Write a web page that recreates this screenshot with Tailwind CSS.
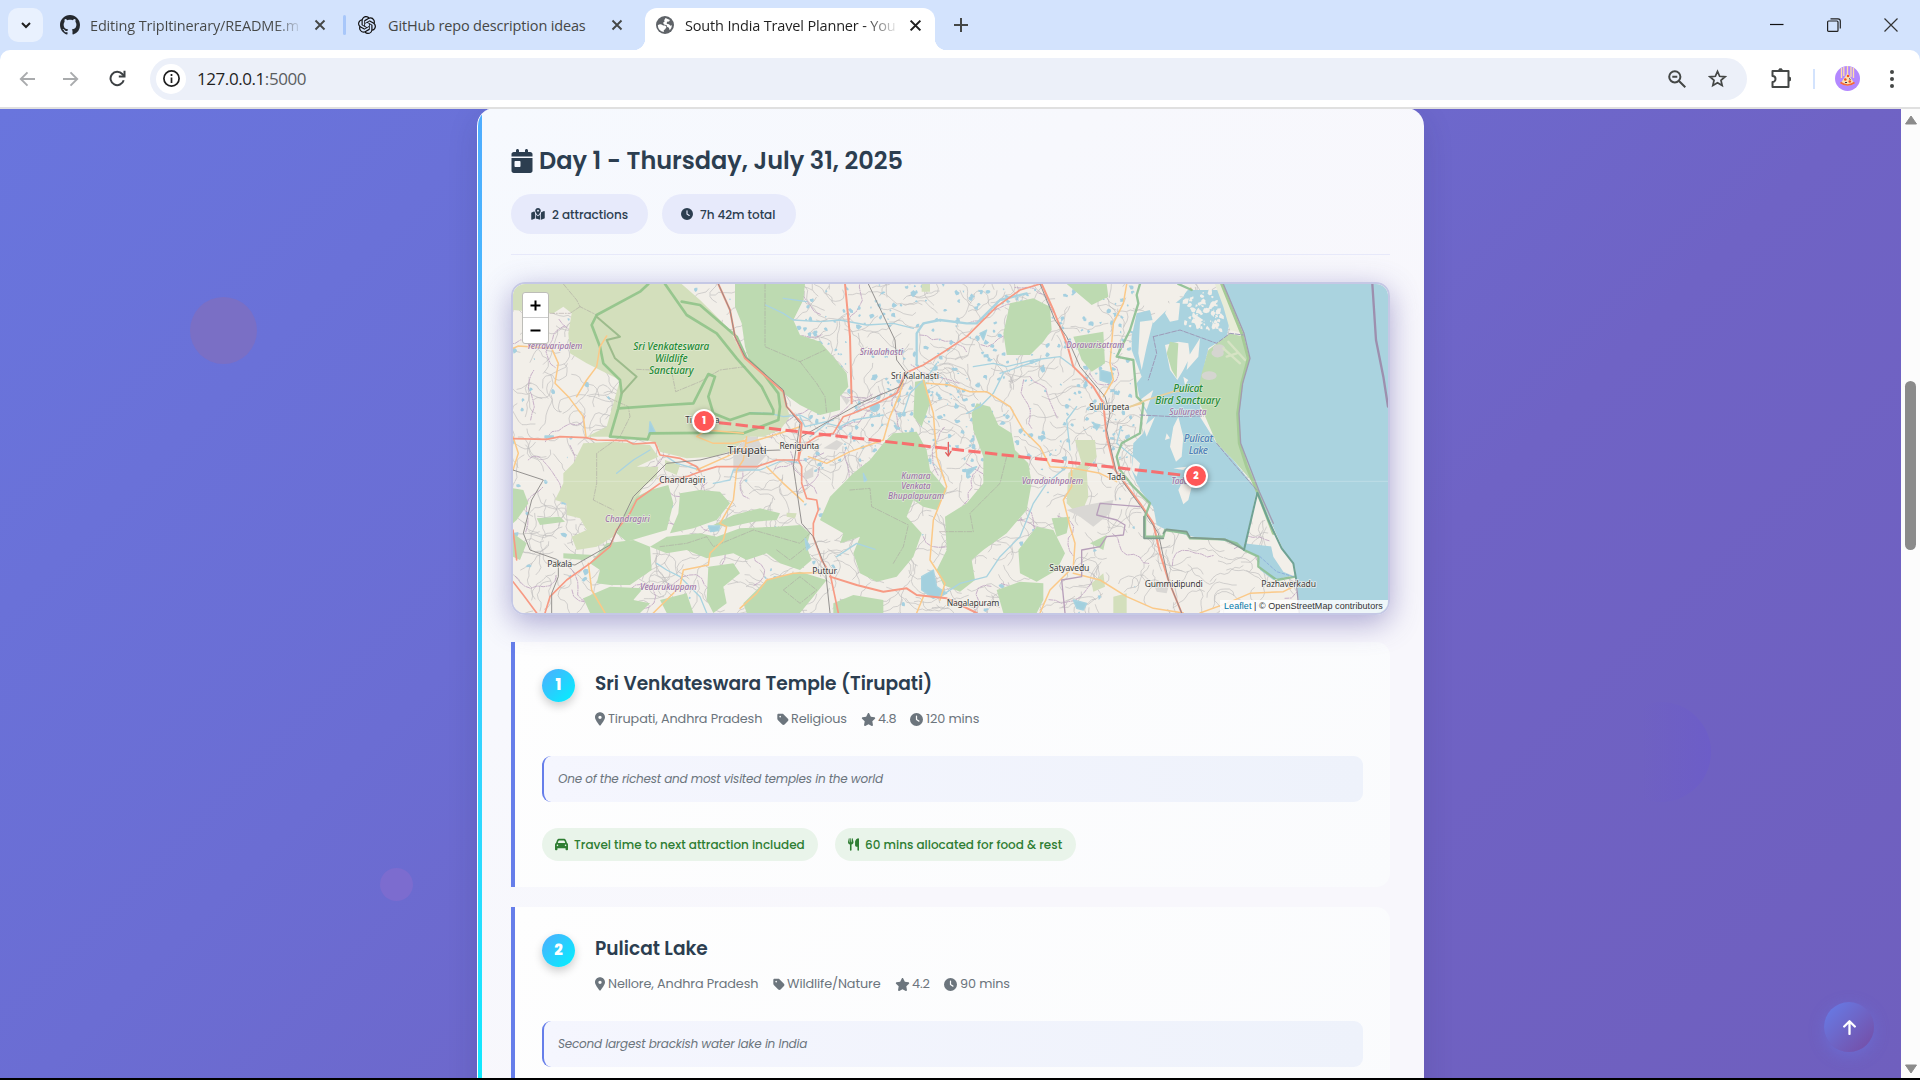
<!DOCTYPE html>
<html lang="en">
<head>
<meta charset="utf-8">
<title>South India Travel Planner</title>
<script src="https://cdn.jsdelivr.net/npm/@tailwindcss/browser@4"></script>
</head>
<body class="w-[1920px] h-[1080px] overflow-hidden bg-black font-[Poppins,Inter,sans-serif]">
<svg class="hidden">
  <symbol id="i-clock" viewBox="0 0 512 512"><path d="M256 0a256 256 0 1 1 0 512A256 256 0 1 1 256 0zM232 120V256c0 8 4 15.5 10.7 20l96 64c11 7.4 25.9 4.4 33.3-6.7s4.4-25.9-6.7-33.3L280 243.2V120c0-13.3-10.7-24-24-24s-24 10.7-24 24z"/></symbol>
  <symbol id="i-pin" viewBox="0 0 384 512"><path d="M215.7 499.2C267 435 384 279.4 384 192C384 86 298 0 192 0S0 86 0 192c0 87.4 117 243 168.3 307.2c12.3 15.3 35.1 15.3 47.4 0zM192 128a64 64 0 1 1 0 128 64 64 0 1 1 0-128z"/></symbol>
  <symbol id="i-star" viewBox="0 0 576 512"><path d="M316.9 18C311.6 7 300.4 0 288.1 0s-23.4 7-28.8 18L195 150.3 51.4 171.5c-12 1.8-22 10.2-25.7 21.7s-.7 24.2 7.9 32.7L137.8 329 113.2 474.7c-2 12 3 24.2 12.9 31.3s23 8 33.8 2.3l128.3-68.5 128.3 68.5c10.8 5.7 23.9 4.9 33.8-2.3s14.9-19.3 12.9-31.3L438.5 329 542.7 225.9c8.6-8.5 11.7-21.2 7.9-32.7s-13.7-19.9-25.7-21.7L381.2 150.3 316.9 18z"/></symbol>
  <symbol id="i-tag" viewBox="0 0 448 512"><path d="M0 80V229.5c0 17 6.7 33.3 18.7 45.3l176 176c25 25 65.5 25 90.5 0L418.7 317.3c25-25 25-65.5 0-90.5l-176-176c-12-12-28.3-18.7-45.3-18.7H48C21.5 32 0 53.5 0 80zm112 32a32 32 0 1 1 0 64 32 32 0 1 1 0-64z"/></symbol>
  <symbol id="i-close" viewBox="0 0 12 12"><path d="M1.5 1.5l9 9M10.500 1.500l-9 9" fill="none" stroke="currentColor" stroke-width="1.900"/></symbol>
</svg>

<!-- tab strip -->
<div class="h-[50px] bg-[#d3e3fd] flex items-start pl-2 pt-2 font-['Segoe_UI','Open_Sans',sans-serif] text-[14.500px] tracking-[-0.160px] text-[#454746]">
  <div class="w-[35px] h-[34px] rounded-[10px] bg-[#e9f1fe] grid place-items-center">
    <svg class="w-3 h-3" viewBox="0 0 12 12" fill="none" stroke="#1f1f1f" stroke-width="2"><path d="M2 4l4 4 4-4"/></svg>
  </div>
  <div class="ml-[17px] h-[34px] w-[283px] flex items-center">
    <svg class="w-5 h-5 shrink-0" viewBox="0 0 16 16" fill="#24292f"><path d="M8 0C3.58 0 0 3.58 0 8c0 3.540 2.290 6.530 5.470 7.590.4.070.55-.17.55-.38 0-.19-.01-.82-.01-1.490-2.010.37-2.530-.49-2.690-.94-.09-.23-.48-.94-.82-1.130-.28-.15-.68-.52-.01-.53.63-.01 1.080.58 1.230.82.72 1.210 1.870.87 2.330.66.070-.52.28-.87.51-1.070-1.780-.2-3.640-.89-3.640-3.950 0-.87.31-1.590.82-2.150-.08-.2-.36-1.020.08-2.120 0 0 .67-.21 2.200.82.64-.18 1.320-.27 2-.27s1.360.09 2 .27c1.530-1.040 2.200-.82 2.200-.82.44 1.100.16 1.920.08 2.120.51.56.82 1.270.82 2.150 0 3.070-1.870 3.750-3.650 3.950.29.25.54.73.54 1.480 0 1.070-.01 1.930-.01 2.200 0 .21.15.46.55.38A8.010 8.010 0 0 0 16 8c0-4.420-3.580-8-8-8z"/></svg>
    <div class="ml-[10px] pt-px w-[210px] overflow-hidden whitespace-nowrap bg-gradient-to-r from-[#454746] from-88% to-[#454746]/10 bg-clip-text text-transparent">Editing TripItinerary/README.m</div>
    <svg class="w-3 h-3 ml-[14px]"><use href="#i-close"/></svg>
  </div>
  <div class="w-[3px] h-5 rounded bg-[#a8c7fa] mt-[7px]"></div>
  <div class="ml-[12px] h-[34px] w-[287px] flex items-center">
    <svg class="w-[18px] h-[18px]" viewBox="0 0 24 24" fill="#111"><path d="M22.2819 9.8211a5.9847 5.9847 0 0 0-.5157-4.9108 6.0462 6.0462 0 0 0-6.5098-2.9A6.0651 6.0651 0 0 0 4.9807 4.1818a5.9847 5.9847 0 0 0-3.9977 2.9 6.0462 6.0462 0 0 0 .7427 7.0966 5.98 5.98 0 0 0 .511 4.9107 6.051 6.051 0 0 0 6.5146 2.9001A5.9847 5.9847 0 0 0 13.2599 24a6.0557 6.0557 0 0 0 5.7718-4.2058 5.9894 5.9894 0 0 0 3.9977-2.9001 6.0557 6.0557 0 0 0-.7475-7.0729zm-9.022 12.6081a4.4755 4.4755 0 0 1-2.8764-1.0408l.1419-.0804 4.7783-2.7582a.7948.7948 0 0 0 .3927-.6813v-6.7369l2.02 1.1686a.071.071 0 0 1 .038.052v5.5826a4.504 4.504 0 0 1-4.4945 4.4944zm-9.6607-4.1254a4.4708 4.4708 0 0 1-.5346-3.0137l.142.0852 4.783 2.7582a.7712.7712 0 0 0 .7806 0l5.8428-3.3685v2.3324a.0804.0804 0 0 1-.0332.0615L9.74 19.9502a4.4992 4.4992 0 0 1-6.1408-1.6464zM2.3408 7.8956a4.485 4.485 0 0 1 2.3655-1.9728V11.6a.7664.7664 0 0 0 .3879.6765l5.8144 3.3543-2.0201 1.1685a.0757.0757 0 0 1-.071 0l-4.8303-2.7865A4.504 4.504 0 0 1 2.3408 7.872zm16.5963 3.8558L13.1038 8.364 15.1192 7.2a.0757.0757 0 0 1 .071 0l4.8303 2.7913a4.4944 4.4944 0 0 1-.6765 8.1042v-5.6772a.79.79 0 0 0-.407-.667zm2.0107-3.0231l-.142-.0852-4.7735-2.7818a.7759.7759 0 0 0-.7854 0L9.409 9.2297V6.8974a.0662.0662 0 0 1 .0284-.0615l4.8303-2.7866a4.4992 4.4992 0 0 1 6.6802 4.66zM8.3065 12.863l-2.02-1.1638a.0804.0804 0 0 1-.038-.0567V6.0742a4.4992 4.4992 0 0 1 7.3757-3.4537l-.142.0805L8.704 5.459a.7948.7948 0 0 0-.3927.6813zm1.0976-2.3654l2.602-1.4998 2.6069 1.4998v2.9994l-2.5974 1.4997-2.6067-1.4997Z"/></svg>
    <div class="ml-[12px] pt-px w-[208px] whitespace-nowrap">GitHub repo description ideas</div>
    <svg class="w-3 h-3 ml-[15px]"><use href="#i-close"/></svg>
  </div>
  <!-- active tab -->
  <div class="relative w-[290px] h-[42px] rounded-t-[12px] bg-white flex items-start text-[#1f1f1f]">
    <div class="absolute -left-3 bottom-0 w-3 h-3 bg-[radial-gradient(circle_at_0_0,#d3e3fd_12px,#fff_12.500px)]"></div>
    <div class="absolute -right-3 bottom-0 w-3 h-3 bg-[radial-gradient(circle_at_100%_0,#d3e3fd_12px,#fff_12.500px)]"></div>
    <div class="h-[34px] w-full flex items-center pl-[11px]">
      <svg class="w-[18px] h-[18px]" viewBox="0 0 18 18"><circle cx="9" cy="9" r="9" fill="#5f6368"/><path d="M1.800 9.200q1.700-1.200 3.700-.7l1.700 1h2l1.300 1.500-1.500 2.500-1.200.5v1.900A7.200 7.200 0 0 1 1.800 9.200zM9.500 2l4.500 1.900-1 1.600-2 .2-.3 2 2.300.5 1.500 1.600 1.500-.5q-.2 3-2.300 4.900l-.8-2.500-1.900-.9-.2-1.600-2.800-.6L7 6.700l1.500-.9-.3-1.600z" fill="#fff"/></svg>
      <div class="ml-[11px] pt-px w-[211px] overflow-hidden whitespace-nowrap bg-gradient-to-r from-[#1f1f1f] from-85% to-[#1f1f1f]/10 bg-clip-text text-transparent">South India Travel Planner - You</div>
      <svg class="w-[13px] h-[13px] ml-[13px]"><use href="#i-close"/></svg>
    </div>
  </div>
  <div class="h-[34px] flex-1 flex items-center pl-[19px] pr-[22px]">
    <svg class="w-[14px] h-[14px]" viewBox="0 0 14 14" stroke="#444746" stroke-width="2"><path d="M7 0v14M0 7h14"/></svg>
    <div class="ml-auto flex items-center gap-[43px]">
      <svg class="w-[14px] h-[14px]" viewBox="0 0 14 14" stroke="#111" stroke-width="1.200"><path d="M0 6.500h13.500"/></svg>
      <svg class="w-[14px] h-[14px]" viewBox="0 0 14 14" fill="none" stroke="#222" stroke-width="1.200"><rect x=".6" y="3" width="10.400" height="10.400" rx="1"/><path d="M3.500.8H11a2.300 2.300 0 0 1 2.300 2.300v7.500"/></svg>
      <svg class="w-[14px] h-[14px]" viewBox="0 0 14 14" stroke="#333" stroke-width="1.200"><path d="M.5.5l13 13M13.500.5l-13 13"/></svg>
    </div>
  </div>
</div>

<!-- toolbar -->
<div class="bg-[#d3e3fd]"><div class="h-[59px] rounded-t-[10px] bg-white border-b-2 border-[#e0e0e0] flex items-center pl-[19px] pr-[18px]">
  <svg class="w-4 h-4 mr-[28px]" viewBox="0 0 16 16" fill="none" stroke="#a9abad" stroke-width="1.900"><path d="M16 8H2M8.500 1.300L1.800 8l6.700 6.700"/></svg>
  <svg class="w-4 h-4 mr-[30px]" viewBox="0 0 16 16" fill="none" stroke="#a9abad" stroke-width="1.900"><path d="M0 8h14M7.500 1.300L14.200 8l-6.700 6.700"/></svg>
  <svg class="w-[17px] h-[17px] mr-[24px]" viewBox="0 0 17 17" fill="none" stroke="#3c4043" stroke-width="2"><path d="M14.700 10.200A6.700 6.700 0 1 1 13.300 4L15 5.800"/><path d="M15.500.8v5.700H9.800"/></svg>
  <div class="w-[1597px] h-[42px] rounded-full bg-[#ecf0f9] flex items-center pl-[6px] pr-5">
    <div class="w-[30px] h-[30px] rounded-full bg-white grid place-items-center">
      <svg class="w-[17px] h-[17px]" viewBox="0 0 17 17" fill="none" stroke="#1f1f1f" stroke-width="1.700"><circle cx="8.500" cy="8.500" r="7.600"/><path d="M8.500 7.500V13M8.500 4v2"/></svg>
    </div>
    <div class="ml-[11px] pt-px font-['Segoe_UI','Open_Sans',sans-serif] text-[17px] tracking-[-0.430px] text-[#1f1f1f] whitespace-nowrap">127.0.0.1<span class="text-[#5a5d60]">:5000</span></div>
    <svg class="ml-auto w-[18px] h-[18px]" viewBox="0 0 18 18" fill="none" stroke="#444746" stroke-width="2"><circle cx="6.800" cy="6.800" r="5.600"/><path d="M11 11l6.300 6.300M4.300 6.800h5"/></svg>
    <svg class="ml-[22px] w-[19px] h-[19px]" viewBox="0 0 24 24" fill="none" stroke="#444746" stroke-width="2.200"><path d="M12 3l2.700 6.200 6.800.6-5.100 4.500 1.500 6.600L12 17.400l-5.900 3.500 1.500-6.600-5.100-4.500 6.800-.6z"/></svg>
  </div>
  <svg class="ml-[24px] w-[21px] h-[21px]" viewBox="0 0 21 21" fill="none" stroke="#444746" stroke-width="2"><path d="M1.500 3h16v16h-16v-5a3 3 0 0 0 0-6z" stroke-linejoin="round"/><path d="M7 3a2.500 2.500 0 0 1 5 0zM17.500 8.500a2.500 2.500 0 0 1 0 5z" fill="#444746" stroke="none"/><path d="M8 2h3M18.500 9.500v3" stroke-width="3"/></svg>
  <div class="ml-[21px] w-[2px] h-5 bg-[#d3e3fd]"></div>
  <svg class="ml-[20px] w-[25px] h-[25px]" viewBox="0 0 25 25"><circle cx="12.500" cy="12.500" r="12.500" fill="#b388ff"/><path d="M6.500 2v10M8.800 1v9M12.500 0v10M16 1v10M18.500 2v10" stroke="#ffe0a8" stroke-width="1.300"/><path d="M12.500 7l7 10.500q-7 4-14 0z" fill="#f9deb0"/><path d="M5.500 16.500q7 5 14 0" stroke="#f2673a" stroke-width="1.700" fill="none"/><g fill="#f4511e"><circle cx="10.300" cy="13.500" r="1.300"/><circle cx="14.800" cy="15.500" r="1.300"/><circle cx="13" cy="10" r="1.200"/></g><path d="M14 12.500l1.500 1M10 16.500h2" stroke="#335"/></svg>
  <svg class="ml-[30px] w-1 h-[18px]" viewBox="0 0 4 18" fill="#444746"><circle cx="2" cy="2" r="2"/><circle cx="2" cy="9" r="2"/><circle cx="2" cy="16" r="2"/></svg>
</div></div>

<!-- page -->
<div class="h-[969px] flex overflow-hidden">
  <main class="relative w-[1901px] h-[969px] overflow-hidden bg-[linear-gradient(135deg,#6975dd_0%,#6b6dd3_35%,#6f63c5_65%,#6f5fbe_100%)] flex justify-center">
    <div class="absolute left-[190px] top-[188px] w-[67px] h-[67px] rounded-full bg-[#7a6fc5]"></div>
    <div class="absolute left-[380px] top-[759px] w-[33px] h-[33px] rounded-full bg-[#7c6ccf]"></div>
    <div class="absolute left-[1611px] top-[593px] w-[100px] h-[100px] rounded-full bg-gradient-to-r from-[#6c5cc9]/0 from-30% to-[#6c5cc9]/80"></div>
    <section class="relative w-[947px] h-[1100px] -mt-px rounded-t-[18px] border-l border-white bg-[linear-gradient(135deg,#f6f9fe,#f8f7fc_60%)] shadow-[0_10px_30px_rgba(31,38,80,0.15)] overflow-hidden flex shrink-0">
      <div class="w-1 h-[970px] shrink-0 bg-gradient-to-b from-[#4facfe] to-[#10e8fe]"></div>
      <div class="pl-[29px] pt-[35px] w-[908px] shrink-0 flex flex-col">
        <h2 class="h-9 flex items-center text-[24px] tracking-[-0.030px] font-semibold text-[#2c3e50] whitespace-nowrap">
          <svg class="w-[22px] h-[24px] mr-[6px]" viewBox="0 0 448 512" fill="#2c3e50"><path d="M128 0c17.700 0 32 14.300 32 32V64H288V32c0-17.700 14.300-32 32-32s32 14.300 32 32V64h48c26.500 0 48 21.500 48 48v48H0V112C0 85.500 21.500 64 48 64H96V32c0-17.700 14.300-32 32-32zM0 192H448V464c0 26.500-21.500 48-48 48H48c-26.500 0-48-21.500-48-48V192zm80 64c-8.800 0-16 7.200-16 16v96c0 8.800 7.200 16 16 16h96c8.800 0 16-7.200 16-16V272c0-8.800-7.200-16-16-16H80z"/></svg>
          <span>Day 1 - Thursday, July 31, 2025</span>
        </h2>
        <div class="mt-[15px] flex gap-[14px] text-[12px] tracking-[-0.040px] font-medium text-[#2c3e50] whitespace-nowrap">
          <div class="w-[137px] h-10 rounded-full bg-[#e7eafb] flex items-center pl-5">
            <svg class="w-[14px] h-[12px] mr-[7px]" viewBox="0 0 576 512" fill="#2c3e50"><path d="M408 120c0 54.600-73.100 151.900-105.200 192c-7.700 9.600-22 9.600-29.600 0C241.100 271.900 168 174.600 168 120C168 53.700 221.700 0 288 0s120 53.700 120 120zm8 80.400c3.500-6.900 6.700-13.800 9.600-20.600c.5-1.200 1-2.500 1.500-3.700l116-46.400C558.900 123.400 576 135 576 152V422.800c0 9.800-6 18.600-15.100 22.300L416 503V200.400zM137.600 138.300c2.400 14.100 7.200 28.300 12.800 41.500c2.900 6.800 6.100 13.700 9.600 20.600V451.800L32.900 502.700C17.100 509 0 497.400 0 480.400V209.600c0-9.800 6-18.600 15.100-22.300l122.600-49zM327.800 332c13.900-17.400 35.700-45.700 56.200-77V504.300L192 449.400V255c20.500 31.300 42.300 59.600 56.200 77c20.500 25.600 59.100 25.600 79.600 0zM288 152a40 40 0 1 0 0-80 40 40 0 1 0 0 80z"/></svg>
            <span class="pt-px">2 attractions</span>
          </div>
          <div class="w-[134px] h-10 rounded-full bg-[#e7eafb] flex items-center pl-[19px]">
            <svg class="w-[12px] h-[12px] mr-[7px]" fill="#2c3e50"><use href="#i-clock"/></svg>
            <span class="pt-px">7h 42m total</span>
          </div>
        </div>
        <div class="mt-[20px] h-px bg-[#e7e9fa]"></div>

        <!-- map -->
        <div class="relative mt-[27px] h-[333px] rounded-[14px] border-2 border-[#c5c8e5] overflow-visible shadow-[0_8px_30px_rgba(80,70,160,0.450)]">
          <svg class="w-full h-full rounded-[12px]" viewBox="39 42 2625 987" preserveAspectRatio="none" fill="none" stroke-linejoin="round" stroke-linecap="round" font-family="Noto Sans, sans-serif">
            <rect x="39" y="42" width="2625" height="987" fill="#f2efe9"/>
            <g id="under"></g>
            <g fill="#d3dfbc">
              <path d="M39 42H545L600 90 640 130 690 180 715 230 735 265 790 310 850 365 860 410 870 440 840 480 790 500 740 500 700 540 640 560 560 565 520 555 480 545 470 520 440 510 330 500 260 500 320 470 360 330 300 300 260 280 210 250 205 190 215 130 190 110 160 130 100 125 39 120Z"/>
              <path d="M250 520L340 515 450 525 475 560 410 590 475 590 470 620 430 650 410 690 370 740 340 800 290 830 230 840 215 800 260 780 240 745 200 735 200 700 165 690 190 640 190 610 220 580Z"/>
              <path d="M495 570L540 585 530 615 495 600ZM1265 42H1290V65H1265ZM860 728L890 730 885 745 860 740Z"/>
              <path d="M1725 510L1785 510 1790 560 1760 600 1765 680 1740 740 1700 700 1705 610 1745 580ZM1775 940L1810 910 1815 950 1780 965ZM1840 980L1880 970 1880 1029H1840Z"/>
            </g>
            <g fill="#bddab1">
              <path d="M705 42H915L910 90 880 150 900 195 960 215 1000 260 1040 310 1045 350 1020 380 1020 420 960 435 900 405 850 370 800 320 750 280 735 230 725 160 705 110Z"/>
              <path d="M505 645L520 700 500 780 430 800 380 815 350 790 370 740 410 680 450 660ZM540 670L600 660 660 665 690 700 650 750 580 775 510 790 535 730ZM640 765L700 735 780 715 840 730 830 750 760 755 690 770Z"/>
              <path d="M450 830L500 800 600 790 650 800 720 775 830 770 900 765 930 790 920 830 935 870 900 900 840 880 800 850 740 870 700 850 620 865 560 840 500 850ZM320 820L400 810 450 830 455 900 390 945 330 945 290 940 300 900 270 880ZM625 890L700 880 720 910 670 950 680 1000 640 1029 620 990Z"/>
              <path d="M730 1000L800 930 900 905 980 930 940 980 900 1029H740ZM1000 1000L1060 975 1150 990 1150 1029H1000ZM250 985L330 950 430 955 400 990 450 1000 420 1029H270ZM480 990L560 970 580 1029H500ZM190 850L280 855 250 870 190 865ZM110 745L180 740 195 755 120 765Z"/>
              <path d="M1180 490L1250 485 1280 540 1290 600 1340 660 1310 720 1270 710 1240 690 1220 740 1265 790 1240 860 1190 920 1130 935 1080 910 1060 850 1080 800 1020 820 1030 790 960 750 990 680 1060 610 1110 570 1150 520Z"/>
              <path d="M1245 335L1275 330 1290 400 1265 470 1240 440ZM39 655L70 660 85 700 50 750 39 760ZM39 790L80 820 60 870 39 860Z"/>
              <g transform="translate(1320 0)">
                <path d="M110 400L150 410 175 465 215 490 225 540 265 580 275 640 260 720 200 790 130 840 95 870 105 930 60 965 10 945 -10 900 20 840 15 740 80 700 130 640 130 560 100 480 95 430ZM210 100L280 85 330 110 335 180 310 215 270 255 200 255 190 190ZM380 42H500L505 80 455 105ZM400 200L490 185 495 280 455 305 425 270Z"/>
                <path d="M235 840L290 770 340 780 375 850 350 900 290 935 240 910ZM170 960L240 935 310 940 310 990 290 1029H190ZM335 745L390 740 380 790 350 800ZM450 820L500 795 490 840Z"/>
              </g>
            </g>
            <g stroke="#a9a09f" stroke-width="2" stroke-dasharray="14 5 3 5" opacity=".8">
              <path d="M190 42L230 90 240 110 290 135M150 130H210L240 110M410 298L460 300 515 305 527 365 600 335 660 300 735 290M330 385L385 410 390 440 360 500 290 550 290 640 280 690 340 720M795 42V230L900 275 975 240M900 275L950 340 975 380 980 430M1050 660L1110 655 1115 710 1225 765 1210 830 1180 880M1320 785H1420L1410 730 1500 640 1520 560M480 830L560 820 620 800 640 830 760 780 900 820 930 790M830 840L870 870 920 830M850 960L900 920 950 960 900 1000Z"/>
            </g>
            <!-- built-up areas -->
            <path d="M700 555L740 500 770 500 800 555 760 600 700 610ZM1020 375L1050 390 1040 405ZM1700 720L1760 705 1840 690 1830 730 1780 770 1740 740ZM1960 940L2010 935 2000 970 1970 965ZM1010 510L1030 520 1010 540 970 535ZM910 610L940 590 940 620 915 630Z" fill="#d9d7d4"/>
            <!-- rivers -->
            <g stroke="#a9d3e0" stroke-width="4">
              <path d="M797 105L850 130 880 150 960 155 1020 150 1100 165 1180 160 1240 175M850 85L920 95M750 428L810 430 850 440 900 435 930 450M930 500L980 460 1020 470 1060 450 1150 435M900 440L915 470 1000 450M700 600L780 600 850 570 900 580M500 560L530 580 600 600M640 640L690 630 700 600M350 610L400 570 450 540M470 880L500 900 540 920 600 980 620 1029M1010 860L1070 820 1125 838"/>
              <path d="M1250 280V190L1270 160 1320 150 1400 160 1430 160 1460 130 1500 90 1580 70" stroke-width="7"/>
              <path d="M1210 430L1230 370 1290 310 1310 280M1420 290L1480 280 1520 290 1600 270 1680 260 1720 290M1510 310L1480 370 1440 410 1400 430M1860 480L1850 520 1900 560 1920 590M1710 540L1700 450 1730 410M1700 590L1640 640 1600 700 1560 800 1500 860 1460 920 1380 940 1320 980M1500 310L1560 290 1620 270"/>
              <path d="M1130 398a14 14 0 1 1-20 15zM625 768L660 768 655 782 632 785ZM1265 920L1300 900 1310 950 1340 970 1300 985 1265 960ZM450 455L465 485 447 490ZM915 805L930 830 920 840ZM1800 300L1840 310 1830 340 1800 330ZM1720 990L1760 1000 1750 1020 1730 1015ZM1400 600L1430 590 1400 620ZM1440 190L1460 180 1450 210ZM1780 460L1800 465 1790 480ZM135 498H160V503H135ZM1090 610L1100 630 1093 635Z" fill="#a3d0de"/>
            </g>
            <!-- sanctuary limits -->
            <g stroke="#8cc287" stroke-width="8" opacity=".85">
              <path d="M445 42L420 65 290 135 275 165 300 230 310 280 360 330 365 370 355 415 330 500 443 508 450 490 700 488 730 490 835 450 840 410 835 370 790 310 740 265 710 200 600 105 545 95M495 42L560 135 650 190 710 265 785 350 820 420 820 432 750 430 690 450 640 430 625 380 645 320 625 312 580 400 500 405 355 415"/>
              <path d="M290 140L360 200 320 210 345 265 375 290 410 320 365 370" stroke="#93b684" stroke-width="6"/>
            </g>
            <!-- secondary roads -->
            <g stroke="#fbc988" stroke-width="4.500">
              <path d="M39 235L55 228 155 235 175 280 165 340 205 380 250 440 258 500M230 380L260 330 290 290 300 230 320 198M39 500L55 550 39 600M265 880L275 960 315 1029M460 1029L540 950 550 900 625 885 630 850 670 810 680 770 660 760 700 690 710 600 730 570 740 500M590 500L640 520 700 520 740 510M590 500L620 480 680 485 730 490M740 520L840 490 900 470M590 600L680 560 740 530M800 590L850 640 910 695M925 560L980 580 1050 545 1150 510M720 1015L770 970 800 930 880 910 950 908M1150 510L1170 440 1200 370 1215 310M1270 330L1300 430 1310 560 1340 650 1300 750 1290 870 1335 940 1320 990M1280 340L1350 345 1410 365 1460 365 1530 410 1570 480 1620 530 1650 590 1720 595 1800 610 1850 635M1715 600L1715 650 1690 690 1710 770 1725 820 1720 890 1690 920 1650 960 1620 1029M1720 910L1800 930 1880 980 1960 1015 2050 1029M1880 42L1870 100 1840 160 1830 280 1840 330 1810 380M1890 410L1960 390 2020 370M2100 1029L2180 1000 2250 970 2350 965 2380 950M1250 1029L1270 980M2060 42L2075 60"/>
            </g>
            <!-- primary roads -->
            <g stroke="#f79a84" stroke-width="5">
              <path d="M39 506L140 508 180 500 258 503 290 510 380 512 400 522 465 518 480 555 540 565 590 590 600 605 650 590 770 590 830 570 895 570 905 590 905 640 920 685 950 690 955 720 940 760 940 800 965 870 990 910 1015 1029M600 605L560 620 480 640 410 690 390 730 350 780 330 830 270 880 200 930 150 980 135 1029M39 935L70 975 110 1029M39 780L50 870M895 570L905 530 950 500 1000 490 1030 440 1060 430 1130 400 1190 370 1215 310 1270 285 1340 240 1400 200 1490 110 1560 60 1620 42"/>
              <path d="M1035 42L1050 200 1055 400M655 42L690 120 705 200 735 265 850 365 860 410 905 460 895 570M990 920L1070 945 1150 965 1220 955 1250 975 1340 985 1430 1029M1625 42L1660 120 1700 220 1720 290 1780 350 1810 400 1820 500 1845 600 1920 700 1960 760 1980 850 2005 930 2045 1029" stroke-width="6"/>
            </g>
            <g stroke="#8d8a89" stroke-width="2.800">
              <path d="M39 600L130 630 95 690 70 790 90 840 175 870 175 920 155 970 155 1029M155 875L225 885 330 825 400 680 500 580 600 570 700 545 840 540M655 42L690 120 705 200 735 260 850 360 860 410 900 460 880 590 905 760 940 800 975 890 990 1029M1105 42L1185 210 1190 270 1220 310 1200 350 1080 400 905 500M1620 42L1665 150 1700 200 1740 290 1815 380 1830 430 1820 480 1850 610 1930 720 1975 790 2005 930 2045 1029"/>
            </g>
            <!-- lagoon and sea -->
            <g transform="translate(1320 0)">
              <path d="M590 130L630 120 640 160 680 120 730 80 740 60H850L870 150 860 200 805 235 785 320 780 440 830 520 880 570 950 660 912 840 955 860 960 900 1000 930 1065 915 1040 850 1020 830H1000L870 815 760 800 680 780 650 765 640 710 590 640 575 600 580 520 610 490 625 440 600 390 590 340 605 320 575 240 575 200Z" fill="#aad3df"/>
              <path d="M850 42L880 120 910 190 930 265 910 340 895 430 900 520 920 590 955 665 985 740 1030 840 1065 890 1080 1029H1344V42Z" fill="#aad3df"/>
              <path d="M912 838L870 812 780 803 700 780 660 768 640 712 600 660V640L912 800Z" fill="#aad3df"/>
              <path d="M870 190L910 200 928 265 908 340 895 430 900 520 950 650 880 570 830 520 800 450 770 380 785 310 805 240Z" fill="#bddab1"/>
              <path d="M825 42H850L910 190 870 180 850 110Z" fill="#e8ecd8"/>
              <path d="M955 670L990 750 1030 840 1055 870 1065 920 1030 905 1000 860 985 790Z" fill="#f2efe9"/>
              <g fill="#f2efe9">
                <path d="M715 440L730 500 725 560 708 575 690 530 700 470ZM725 640L755 650 745 690 730 703 715 660ZM675 225L715 215 745 220 750 260 730 300 712 330 690 300ZM780 205L775 260 740 300 745 260ZM690 95L720 100 715 150 690 155 675 130ZM600 155L640 150 620 230 605 300 595 250ZM640 42H760L730 75 680 95 640 130 610 105ZM760 130L790 150 770 165ZM730 320L745 330 735 345ZM680 490L690 505 675 510ZM700 595L740 590 730 600ZM600 390L640 360 620 420ZM610 470L645 440 620 500ZM580 560L600 580 590 620 575 600Z"/>
                <g id="isles"></g>
              </g>
              <path d="M690 215L715 220 712 270 710 325 695 300 680 250Z" fill="#bddab1"/>
              <path d="M820 240a18 13 0 1 0 30 5 18 13 0 1 0-30-5zM785 318a22 13 0 1 0 45-2 22 13 0 1 0-45 2z" fill="#d5d5d0"/>
              <path d="M850 235L900 280M865 215L915 270M860 260L890 250" stroke="#d6e3c4" stroke-width="7"/>
              <path d="M600 42L590 75 595 100 570 180 530 260 580 270 590 380 610 400 600 490 545 520 530 560 540 600 580 650 630 700 615 740 615 800 670 800 675 780 740 790 750 805 850 808 890 820 912 840 955 860 955 890 1010 930 1065 920M715 42L755 60" stroke="#8cbf91" stroke-width="7" opacity=".9"/>
              <path d="M845 42L905 190 925 265 905 340 893 430 898 520 920 590 952 665 1000 790" stroke="#a5cb97" stroke-width="9"/>
              <path d="M912 840L952 668L985 750 1025 835 1060 880 1068 925" stroke="#6fa294" stroke-width="6"/>
              <path d="M850 42L912 190 930 265 908 340 897 430 902 520 958 665 1000 760M1068 930L1078 1029" stroke="#a29bb0" stroke-width="4"/>
              <path d="M612 740V805H670M670 790L680 778 740 785 750 803 855 808 910 838" stroke="#7f9c8d" stroke-width="5"/>
              <path d="M1297 42L1308 210 1330 320 1344 410" stroke="#9d8fae" stroke-width="7"/>
              <path d="M600 435L700 440 790 438M830 520L880 580 950 660M640 200L720 180 830 220 870 190 910 195M640 200L650 250 625 330" stroke="#9d9ab8" stroke-width="3" stroke-dasharray="14 5"/>
              <path d="M570 410L620 390 700 365 760 360" stroke="#e6cf9c" stroke-width="5"/>
              <path d="M960 860L1010 905 1060 920" stroke="#7f9fd8" stroke-width="2" stroke-dasharray="8 6"/>
              <path d="M600 710L480 700 470 735 530 750 555 765 550 795 500 800 480 830 425 840 425 920 365 930 375 1029" stroke="#b79fba" stroke-width="4"/>
            </g>
            <path d="M39 634H2664" stroke="#fff" stroke-width="2" opacity=".35"/>
            <!-- place labels -->
            <g fill="#3b3b3b" stroke="#f8f6f1" stroke-width="5" paint-order="stroke" font-size="26" text-anchor="middle" stroke-opacity=".75">
              <text x="607" y="459" textLength="103">Tirumala</text>
              <text x="741" y="552" font-size="33" textLength="117">Tirupati</text>
              <text x="898" y="537" textLength="119">Renigunta</text>
              <text x="547" y="639" textLength="138">Chandragiri</text>
              <text x="179" y="891" textLength="74">Pakala</text>
              <text x="974" y="912" textLength="74">Puttur</text>
              <text x="1245" y="326" textLength="144">Sri Kalahasti</text>
              <text x="1828" y="420" textLength="120">Sullurpeta</text>
              <text x="1850" y="629" textLength="55">Tada</text>
              <text x="1708" y="903" textLength="120">Satyavedu</text>
              <text x="2021" y="952" textLength="174">Gummidipundi</text>
              <text x="2366" y="951" textLength="164">Pazhaverkadu</text>
              <text x="1419" y="1007" textLength="158">Nagalapuram</text>
            </g>
            <g fill="#9d75a8" stroke="#f8f6f1" stroke-width="4" stroke-opacity=".6" paint-order="stroke" font-size="25" font-weight="500" font-style="italic" text-anchor="middle">
              <text x="164" y="238" textLength="166">Yerravaripalem</text>
              <text x="1144" y="254" textLength="130">Srikalahasti</text>
              <text x="382" y="755" textLength="134">Chandragiri</text>
              <text x="505" y="959" textLength="170">Vedurukuppam</text>
              <text x="1248" y="627" textLength="88">Kumara</text>
              <text x="1248" y="656" textLength="88">Venkata</text>
              <text x="1248" y="686" textLength="168">Bhupalapuram</text>
              <text x="1786" y="234" textLength="174">Doravarisatram</text>
              <text x="1657" y="643" textLength="184">Varadaiahpalem</text>
              <text x="2064" y="434" textLength="112">Sullurpeta</text>
              <text x="2040" y="641" textLength="52">Tada</text>
            </g>
            <g fill="#1f8b36" stroke="#eef3e2" stroke-width="4" stroke-opacity=".6" paint-order="stroke" font-size="30" font-weight="500" font-style="italic" text-anchor="middle">
              <text x="514" y="240" textLength="228">Sri Venkateswara</text>
              <text x="514" y="275" textLength="98">Wildlife</text>
              <text x="514" y="311" textLength="134">Sanctuary</text>
              <text x="2064" y="367" textLength="88">Pulicat</text>
              <text x="2063" y="403" textLength="194">Bird Sanctuary</text>
              <text x="2095" y="516" textLength="88" fill="#4d80bb">Pulicat</text>
              <text x="2095" y="552" textLength="58" fill="#4d80bb">Lake</text>
            </g>
            <!-- route -->
            <path d="M613 453L2088 620" stroke="#f96a6a" stroke-width="9" stroke-dasharray="37 13.200" stroke-linecap="butt" stroke-dashoffset="6" opacity=".95"/>
            <path d="M1345 517V556M1337 548L1345 558 1353 544" stroke="#e0605f" stroke-width="4"/>
          </svg>
          <div class="absolute left-[179px] top-[125px] w-6 h-6 rounded-full bg-[#ff5757] border-2 border-white shadow-[0_2px_6px_rgba(0,0,0,0.400)] grid place-items-center text-white text-[9.500px] font-extrabold">1</div>
          <div class="absolute left-[671px] top-[180px] w-6 h-6 rounded-full bg-[#ff5757] border-2 border-white shadow-[0_2px_6px_rgba(0,0,0,0.400)] grid place-items-center text-white text-[9.500px] font-extrabold">2</div>
          <div class="absolute left-[9px] top-[8px] w-[27px] h-[52px] bg-white border border-[#bdbdb8] rounded-[3px] flex flex-col">
            <div class="h-[25px] border-b border-[#ccc] grid place-items-center"><svg class="w-[11px] h-[11px]" viewBox="0 0 11 11" stroke="#000" stroke-width="2"><path d="M5.500.500v10M.5 5.500h10"/></svg></div>
            <div class="h-[25px] grid place-items-center"><svg class="w-[11px] h-[11px]" viewBox="0 0 11 11" stroke="#000" stroke-width="2"><path d="M.5 5.500h10"/></svg></div>
          </div>
          <div class="absolute right-0 bottom-0 h-[13px] w-[168px] pl-1 rounded-br-[12px] bg-white/80 text-[9px] leading-[13px] tracking-[0.060px] text-[#333] font-['Liberation_Sans',sans-serif] whitespace-nowrap"><span class="text-[#0078a8]">Leaflet</span> | © OpenStreetMap contributors</div>
        </div>

        <!-- stop 1 -->
        <article class="mt-[27px] h-[245px] shrink-0 border-l-4 border-[#667eea] rounded-r-[14px] bg-[linear-gradient(135deg,#fefefe,#fafbfd)] pl-[27px] pt-[27px]">
          <div class="flex">
            <div class="w-[33px] h-[33px] rounded-full bg-[linear-gradient(135deg,#4facfe,#00f2fe)] shadow-[0_4px_10px_rgba(0,0,0,0.200)] grid place-items-center text-white text-[15px] font-extrabold">1</div>
            <div class="ml-[20px] whitespace-nowrap">
              <h3 class="h-[30px] text-[18.600px] leading-[30px] font-semibold text-[#2c3e50]">Sri Venkateswara Temple (Tirupati)</h3>
              <div class="mt-[10px] h-5 flex items-center text-[12.800px] tracking-[-0.110px] text-[#6c757d] fill-[#6c757d]">
                <svg class="w-[10px] h-[14px] mr-[3px]"><use href="#i-pin"/></svg><div class="w-[169px]">Tirupati, Andhra Pradesh</div>
                <svg class="w-[12px] h-[13px] mr-[2px]"><use href="#i-tag"/></svg><div class="w-[70px]">Religious</div>
                <svg class="w-[15px] h-[13px] mr-[2px]"><use href="#i-star"/></svg><div class="w-[32px]">4.8</div>
                <svg class="w-[13px] h-[13px] mr-[3px]"><use href="#i-clock"/></svg><span>120 mins</span>
              </div>
            </div>
          </div>
          <div class="mt-[27px] w-[821px] h-[46px] rounded-[9px] border-l-2 border-[#667eea] bg-[linear-gradient(90deg,#f5f6fe,#eef2fb)] pl-[14px] flex items-center text-[12px] tracking-[-0.225px] italic text-[#6c757d] whitespace-nowrap">One of the richest and most visited temples in the world</div>
          <div class="mt-[26px] flex gap-[17px] text-[12px] font-medium text-[#2e7d32] fill-[#2e7d32] whitespace-nowrap">
            <div class="w-[276px] h-[33px] rounded-full bg-[#e9f4ea] flex items-center pl-[13px]"><svg class="w-[13px] h-[13px] mr-[6px]" viewBox="0 0 512 512"><path d="M135.200 117.400L109.100 192H402.900l-26.100-74.600C372.300 104.600 360.200 96 346.600 96H165.400c-13.600 0-25.700 8.600-30.200 21.400zM39.600 196.800L74.800 96.300C88.300 57.800 124.600 32 165.400 32H346.600c40.800 0 77.100 25.800 90.600 64.300l35.200 100.500c23.200 9.600 39.600 32.500 39.600 59.200V400v48c0 17.700-14.300 32-32 32H448c-17.700 0-32-14.300-32-32V400H96v48c0 17.700-14.300 32-32 32H32c-17.700 0-32-14.300-32-32V400 256c0-26.700 16.400-49.600 39.600-59.200zM128 288a32 32 0 1 0-64 0 32 32 0 1 0 64 0zm288 32a32 32 0 1 0 0-64 32 32 0 1 0 0 64z"/></svg><span class="pt-px">Travel time to next attraction included</span></div>
            <div class="w-[241px] h-[33px] rounded-full bg-[#e9f4ea] flex items-center pl-[13px]"><svg class="w-[11px] h-[13px] mr-[6px]" viewBox="0 0 448 512"><path d="M416 0C400 0 288 32 288 176V288c0 35.300 28.700 64 64 64h32V480c0 17.700 14.300 32 32 32s32-14.300 32-32V352 240 32c0-17.700-14.300-32-32-32zM64 16C64 7.800 57.900 1 49.700 .1S34.200 4.600 32.400 12.500L2.100 148.800C.7 155.100 0 161.500 0 167.900c0 45.900 35.100 83.600 80 87.700V480c0 17.700 14.300 32 32 32s32-14.300 32-32V255.600c44.900-4.100 80-41.800 80-87.700c0-6.400-.7-12.800-2.100-19.100L191.600 12.500c-1.800-8-9.300-13.300-17.400-12.400S160 7.800 160 16V150.200c0 5.400-4.400 9.800-9.800 9.800c-5.100 0-9.300-3.900-9.800-9L127.900 14.600C127.200 6.300 120.300 0 112 0s-15.200 6.300-15.900 14.600L83.700 151c-.5 5.100-4.700 9-9.800 9c-5.400 0-9.800-4.400-9.800-9.800V16z"/></svg><span class="pt-px">60 mins allocated for food &amp; rest</span></div>
          </div>
        </article>

        <!-- stop 2 -->
        <article class="mt-5 h-[245px] shrink-0 border-l-4 border-[#667eea] rounded-r-[14px] bg-[linear-gradient(135deg,#fefefe,#fafbfd)] pl-[27px] pt-[27px]">
          <div class="flex">
            <div class="w-[33px] h-[33px] rounded-full bg-[linear-gradient(135deg,#4facfe,#00f2fe)] shadow-[0_4px_10px_rgba(0,0,0,0.200)] grid place-items-center text-white text-[15px] font-extrabold">2</div>
            <div class="ml-[20px] whitespace-nowrap">
              <h3 class="h-[30px] text-[18.600px] leading-[30px] font-semibold text-[#2c3e50]">Pulicat Lake</h3>
              <div class="mt-[10px] h-5 flex items-center text-[12.800px] tracking-[-0.110px] text-[#6c757d] fill-[#6c757d]">
                <svg class="w-[10px] h-[14px] mr-[3px]"><use href="#i-pin"/></svg><div class="w-[165px]">Nellore, Andhra Pradesh</div>
                <svg class="w-[12px] h-[13px] mr-[2px]"><use href="#i-tag"/></svg><div class="w-[108px]">Wildlife/Nature</div>
                <svg class="w-[15px] h-[13px] mr-[2px]"><use href="#i-star"/></svg><div class="w-[32px]">4.2</div>
                <svg class="w-[13px] h-[13px] mr-[3px]"><use href="#i-clock"/></svg><span>90 mins</span>
              </div>
            </div>
          </div>
          <div class="mt-[27px] w-[821px] h-[46px] rounded-[9px] border-l-2 border-[#667eea] bg-[linear-gradient(90deg,#f5f6fe,#eef2fb)] pl-[14px] flex items-center text-[12px] tracking-[-0.225px] italic text-[#6c757d] whitespace-nowrap">Second largest brackish water lake in India</div>
        </article>
      </div>
    </section>
    <div class="absolute left-[1824px] top-[893px] w-[50px] h-[50px] rounded-full bg-[linear-gradient(135deg,#667eea,#764ba2)] shadow-[0_4px_15px_rgba(102,126,234,0.400)] grid place-items-center">
      <svg class="w-[13px] h-[15px]" viewBox="0 0 13 15" fill="none" stroke="#fff" stroke-width="2.300" stroke-linecap="round" stroke-linejoin="round"><path d="M6.500 14V1.500M1.200 6.500l5.300-5.200 5.300 5.200"/></svg>
    </div>
  </main>
  <div class="w-[19px] bg-[#fcfcfc] flex flex-col items-center">
    <svg class="mt-[6px] w-3 h-[10px]" viewBox="0 0 12 10"><path d="M6 1l5.500 8H.5z" fill="#8b8b8b" stroke="#8b8b8b" stroke-linejoin="round"/></svg>
    <div class="mt-[256px] w-[11px] h-[169px] rounded-full bg-[#8b8b8b]"></div>
    <svg class="mt-auto mb-[4px] w-3 h-[10px]" viewBox="0 0 12 10"><path d="M6 9L.5 1h11z" fill="#8b8b8b" stroke="#8b8b8b" stroke-linejoin="round"/></svg>
  </div>
</div>

<script>
// minor roads, ponds and administrative limits of the base map
let seed = 11;
const rnd = () => (seed = (seed * 16807) % 2147483647) / 2147483647;
const walk = (n, step) => {
  let x = 39 + rnd() * 2350, y = 42 + rnd() * 987, a = rnd() * 6.3, d = `M${x | 0} ${y | 0}`;
  for (let i = 0; i < n; i++) { a += (rnd() - .5) * 1.6; x += Math.cos(a) * step; y += Math.sin(a) * step; d += `L${x | 0} ${y | 0}`; }
  return d;
};
let roads = '', limits = '', ponds = '', isles = '';
for (let i = 0; i < 850; i++) roads += walk(9, 13);
for (let i = 0; i < 80; i++) limits += walk(8, 20);
const blob = (x, y, r) => { let d = ''; for (let k = 0; k < 7; k++) { const t = k * .9, q = r * (.5 + rnd()); d += `${k ? 'L' : 'M'}${(x + Math.cos(t) * q).toFixed(1)} ${(y + Math.sin(t) * q).toFixed(1)}`; } return d + 'Z'; };
for (let i = 0; i < 560; i++) ponds += blob(i % 3 ? 900 + rnd() * 1000 : 39 + rnd() * 1900, 42 + rnd() * (i % 3 ? 560 : 987), 2 + rnd() * 6);
for (let i = 0; i < 60; i++) isles += blob(735 + rnd() * 110, 65 + rnd() * 120, 2 + rnd() * 7);
document.getElementById('under').innerHTML =
  `<path d="${roads}" stroke="#c0bebe" stroke-width="2"/><path d="${limits}" stroke="#bfa4c2" stroke-width="2.500" stroke-dasharray="12 4 3 4"/><path d="${ponds}" fill="#a6d0e0"/>`;
document.getElementById('isles').innerHTML = `<path d="${isles}"/>`;
</script>
</body>
</html>
